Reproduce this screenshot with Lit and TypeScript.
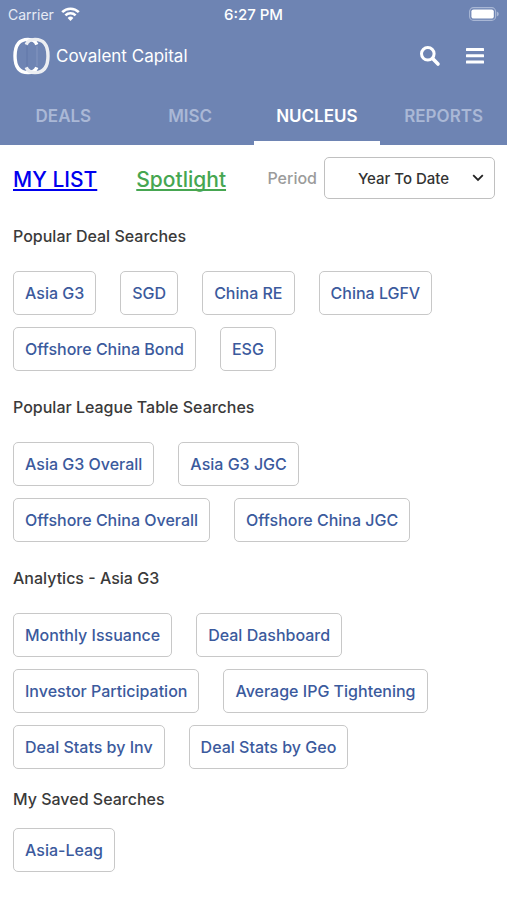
import { LitElement, html, css } from "lit";
import { customElement, property, state } from "lit/decorators.js";
import { classMap } from "lit/directives/class-map.js";

interface Group {
  title: string;
  compact?: boolean;
  items: string[];
}

const TABS = ["DEALS", "MISC", "NUCLEUS", "REPORTS"];

const GROUPS: Group[] = [
  {
    title: "Popular Deal Searches",
    items: ["Asia G3", "SGD", "China RE", "China LGFV", "Offshore China Bond", "ESG"],
  },
  {
    title: "Popular League Table Searches",
    items: ["Asia G3 Overall", "Asia G3 JGC", "Offshore China Overall", "Offshore China JGC"],
  },
  {
    title: "Analytics - Asia G3",
    items: [
      "Monthly Issuance",
      "Deal Dashboard",
      "Investor Participation",
      "Average IPG Tightening",
      "Deal Stats by Inv",
      "Deal Stats by Geo",
    ],
  },
  { title: "My Saved Searches", compact: true, items: ["Asia-Leag"] },
];

@customElement("status-bar")
class StatusBar extends LitElement {
  static styles = css`
    :host {
      display: grid;
      grid-template-columns: 1fr auto 1fr;
      align-items: center;
      height: 28px;
      padding: 0 8px;
      color: #fff;
      font-size: 14px;
    }
    .carrier {
      display: flex;
      align-items: center;
      gap: 7px;
      color: #e6ebf5;
    }
    .time {
      font-size: 15px;
      font-weight: 500;
    }
    .battery {
      justify-self: end;
    }
    svg {
      display: block;
    }
  `;

  render() {
    return html`
      <div class="carrier">
        <span>Carrier</span>
        <svg width="19" height="14" viewBox="0 0 19 14" fill="none" stroke="#fff" stroke-width="2.6">
          <path d="M1.2 5.1a11.8 11.8 0 0 1 16.6 0" />
          <path d="M4.4 8.4a7.3 7.3 0 0 1 10.2 0" />
          <path d="M9.5 14 6.6 11a4.1 4.1 0 0 1 5.8 0z" fill="#fff" stroke="none" />
        </svg>
      </div>
      <div class="time">6:27 PM</div>
      <svg class="battery" width="30" height="14" viewBox="0 0 30 14">
        <rect x="0.6" y="0.6" width="26" height="12.8" rx="4" fill="none" stroke="#a9b7d5" stroke-width="1.1" />
        <rect x="2.4" y="2.4" width="22.4" height="9.2" rx="2.2" fill="#fff" />
        <path d="M27.8 4.6q2 .8 2 2.4t-2 2.4z" fill="#a9b7d5" />
      </svg>
    `;
  }
}

@customElement("search-group")
class SearchGroup extends LitElement {
  @property({ attribute: false }) group!: Group;

  static styles = css`
    :host {
      display: block;
    }
    .title {
      margin: 0;
      color: #3a3a3a;
      font-size: 16px;
      font-weight: 500;
      line-height: 24px;
    }
    .chips {
      display: flex;
      flex-wrap: wrap;
      gap: 12px 24px;
      margin-top: 23px;
    }
    .chips.compact {
      margin-top: 17px;
    }
    .chip {
      height: 44px;
      padding: 0 11px;
      border: 1px solid #c8c8c8;
      border-radius: 5px;
      background: #fff;
      color: #3b5a9d;
      font: inherit;
      font-size: 16px;
      font-weight: 500;
      cursor: pointer;
    }
  `;

  render() {
    const { title, items, compact = false } = this.group;
    return html`
      <h2 class="title">${title}</h2>
      <div class=${classMap({ chips: true, compact })}>
        ${items.map((item) => html`<button class="chip" type="button">${item}</button>`)}
      </div>
    `;
  }
}

@customElement("app-root")
class AppRoot extends LitElement {
  @state() private active = "NUCLEUS";

  static styles = css`
    :host {
      display: block;
      min-height: 100vh;
      background: #fff;
      font-family: Inter, "Liberation Sans", sans-serif;
    }
    .header {
      background: #6e84b3;
      color: #fff;
    }
    .brand-row {
      display: flex;
      align-items: center;
      height: 56px;
      padding: 0 20px 0 12px;
    }
    .brand {
      display: flex;
      align-items: center;
      gap: 5px;
      margin: 0 auto 0 0;
      font-size: 17px;
      font-weight: 400;
    }
    .icon-button {
      display: block;
      padding: 2px;
      border: 0;
      background: none;
      color: #fff;
      cursor: pointer;
    }
    .icon-button + .icon-button {
      margin-left: 20px;
    }
    svg {
      display: block;
    }
    .tabs {
      display: grid;
      grid-template-columns: repeat(4, 1fr);
      height: 61px;
    }
    .tab {
      padding: 6px 0 0;
      border: 0;
      border-bottom: 4px solid transparent;
      background: none;
      color: #aab8d6;
      font: inherit;
      font-size: 17px;
      font-weight: 600;
      cursor: pointer;
    }
    .tab.active {
      border-bottom-color: #fff;
      color: #fff;
    }
    .content {
      padding: 12px 12px 24px 13px;
    }
    .filters {
      display: flex;
      align-items: center;
      margin-bottom: 25px;
    }
    .link {
      padding-top: 2px;
      font-size: 21px;
      font-weight: 500;
      text-decoration-thickness: 2px;
      text-underline-offset: 2px;
      text-decoration-skip-ink: none;
    }
    .my-list {
      color: #0000ee;
    }
    .spotlight {
      margin-left: 39px;
      color: #46a651;
    }
    .period {
      margin: 0 7px 0 auto;
      color: #9b9b9b;
      font-size: 16px;
      font-weight: 500;
    }
    .select-box {
      display: grid;
      align-items: center;
      width: 171px;
    }
    .select-box > * {
      grid-area: 1 / 1;
    }
    .select {
      appearance: none;
      width: 100%;
      height: 42px;
      padding: 0 24px 0 12px;
      border: 1px solid #c0c0c0;
      border-radius: 5px;
      background: #fff;
      color: #333;
      font: inherit;
      font-size: 15px;
      font-weight: 500;
      text-align: center;
      text-align-last: center;
    }
    .chevron {
      justify-self: end;
      margin-right: 11px;
      pointer-events: none;
    }
    .groups {
      display: grid;
      gap: 24px;
    }
    .saved {
      margin-top: -6px;
    }
  `;

  render() {
    return html`
      <header class="header">
        <status-bar></status-bar>
        <div class="brand-row">
          <h1 class="brand">
            <svg width="39" height="38" viewBox="0 0 39 38" fill="none">
              <path d="M15 9v20" stroke="#5d74a6" stroke-width="0.8" />
              <path d="M25 9v20" stroke="#8c9dc4" stroke-width="0.8" />
              <path d="M24.8 7.6C23.4 4 20.5 2.4 16 2.4 7 2.4 3 8 3 19s4 16.6 13 16.6c4.5 0 7.4-1.6 8.8-5.200" stroke="#fff" stroke-width="3.4" />
              <path d="M14.2 7.6C15.6 4 18.5 2.4 23 2.4 32 2.4 36 8 36 19s-4 16.6-13 16.6c-4.5 0-7.4-1.6-8.8-5.200" stroke="#eceef2" stroke-width="3.4" />
            </svg>
            <span>Covalent Capital</span>
          </h1>
          <button class="icon-button" type="button" aria-label="Search">
            <svg width="22" height="22" viewBox="0 0 22 22" fill="none" stroke="currentColor">
              <circle cx="8.8" cy="8.8" r="6.3" stroke-width="3" />
              <path d="M13.6 13.6l5.4 5.4" stroke-width="3.6" stroke-linecap="round" />
            </svg>
          </button>
          <button class="icon-button" type="button" aria-label="Menu">
            <svg width="20" height="18" viewBox="0 0 20 18" fill="currentColor">
              <rect x="1" y="1" width="18" height="3" rx="0.6" />
              <rect x="1" y="7.3" width="18" height="3" rx="0.6" />
              <rect x="1" y="13.6" width="18" height="3" rx="0.6" />
            </svg>
          </button>
        </div>
        <nav class="tabs">
          ${TABS.map(
            (tab) => html`<button
              type="button"
              class=${classMap({ tab: true, active: tab === this.active })}
              @click=${() => (this.active = tab)}
            >${tab}</button>`
          )}
        </nav>
      </header>
      <main class="content">
        <div class="filters">
          <a class="link my-list" href="#my-list">MY LIST</a>
          <a class="link spotlight" href="#spotlight">Spotlight</a>
          <label class="period" for="period">Period</label>
          <div class="select-box">
            <select class="select" id="period">
              <option>Year To Date</option>
            </select>
            <svg class="chevron" width="12" height="8" viewBox="0 0 12 8" fill="none" stroke="#222" stroke-width="1.8">
              <path d="M1.2 1.2 6 6l4.8-4.8" />
            </svg>
          </div>
        </div>
        <div class="groups">
          ${GROUPS.map(
            (group) => html`<search-group
              class=${classMap({ saved: !!group.compact })}
              .group=${group}
            ></search-group>`
          )}
        </div>
      </main>
    `;
  }
}
